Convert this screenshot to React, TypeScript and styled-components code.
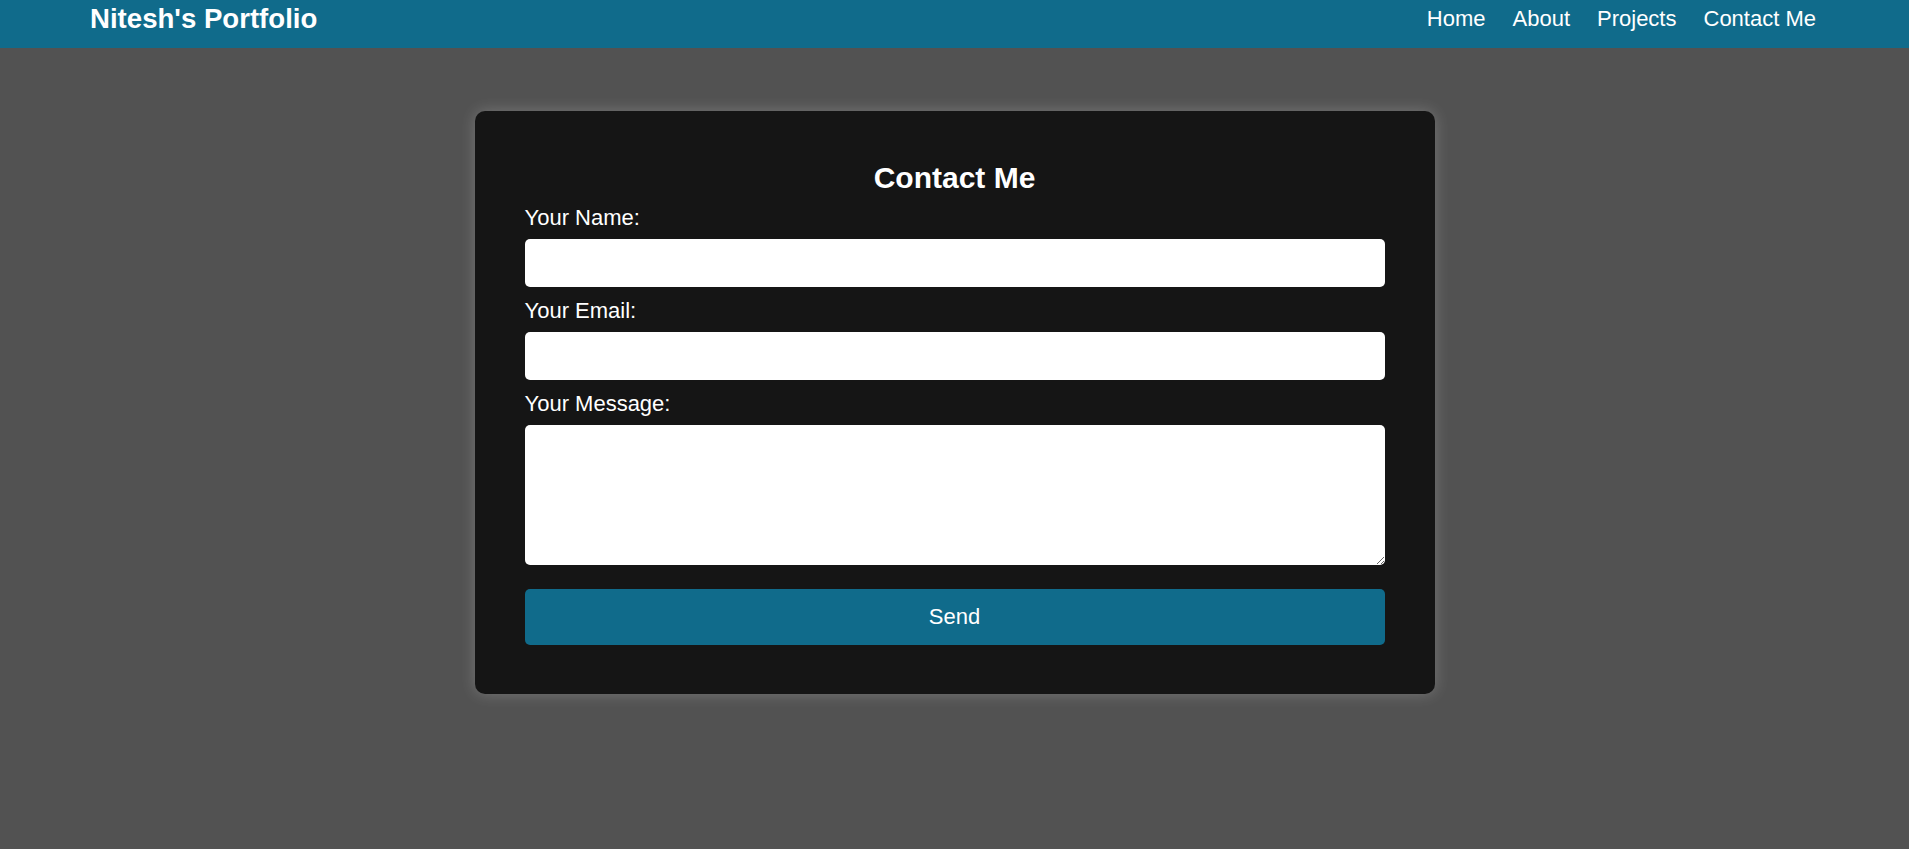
import React from "react";
import styled, { createGlobalStyle } from "styled-components";

const GlobalStyle = createGlobalStyle`
  * { box-sizing: border-box; }
  html, body {
    margin: 0;
    padding: 0;
    background: #525252;
    font-family: "Liberation Sans", Arial, sans-serif;
    color: #ffffff;
  }
`;

const Page = styled.div`
  min-height: 100vh;
  background: #525252;
`;

const Header = styled.header`
  height: 48px;
  background: #106b8b;
  display: flex;
  align-items: center;
  justify-content: space-between;
  padding: 0 93px 12px 90px;
`;

const Logo = styled.div`
  font-size: 27.6px;
  font-weight: 700;
  line-height: 31px;
  color: #ffffff;
`;

const Nav = styled.nav`
  display: flex;
  gap: 27px;
`;

const NavLink = styled.a`
  font-size: 22px;
  line-height: 25px;
  color: #ffffff;
  text-decoration: none;
`;

const Main = styled.main`
  padding-top: 63px;
`;

const Card = styled.section`
  width: 960px;
  margin: 0 auto;
  background: #151515;
  border-radius: 10px;
  padding: 49px 50px 49px;
  box-shadow: 0 0 15px rgba(255, 255, 255, 0.22);
`;

const Form = styled.form`
  display: flex;
  flex-direction: column;
`;

const Title = styled.h2`
  margin: 0 0 10px;
  text-align: center;
  font-size: 30px;
  line-height: 35px;
  font-weight: 700;
`;

const Label = styled.label`
  display: block;
  margin-bottom: 9px;
  font-size: 22px;
  line-height: 25px;
`;

const Input = styled.input`
  display: block;
  width: 100%;
  height: 48px;
  margin-bottom: 11px;
  border: none;
  border-radius: 5px;
  background: #ffffff;
  font-family: inherit;
  font-size: 20px;
  padding: 0 12px;
  outline: none;
`;

const TextArea = styled.textarea`
  display: block;
  width: 100%;
  height: 140px;
  border: none;
  border-radius: 5px;
  background: #ffffff;
  font-family: inherit;
  font-size: 20px;
  padding: 12px;
  outline: none;
`;

const SendButton = styled.button`
  margin-top: 24px;
  height: 56px;
  width: 100%;
  border: none;
  border-radius: 5px;
  background: #106b8b;
  color: #ffffff;
  font-family: inherit;
  font-size: 22px;
  cursor: pointer;
`;

export default function App() {
  return (
    <Page>
      <GlobalStyle />
      <Header>
        <Logo>Nitesh's Portfolio</Logo>
        <Nav>
          <NavLink href="#home">Home</NavLink>
          <NavLink href="#about">About</NavLink>
          <NavLink href="#projects">Projects</NavLink>
          <NavLink href="#contact">Contact Me</NavLink>
        </Nav>
      </Header>
      <Main>
        <Card>
          <Form onSubmit={(e) => e.preventDefault()}>
            <Title>Contact Me</Title>
            <Label htmlFor="name">Your Name:</Label>
            <Input id="name" type="text" />
            <Label htmlFor="email">Your Email:</Label>
            <Input id="email" type="email" />
            <Label htmlFor="message">Your Message:</Label>
            <TextArea id="message" />
            <SendButton type="submit">Send</SendButton>
          </Form>
        </Card>
      </Main>
    </Page>
  );
}
